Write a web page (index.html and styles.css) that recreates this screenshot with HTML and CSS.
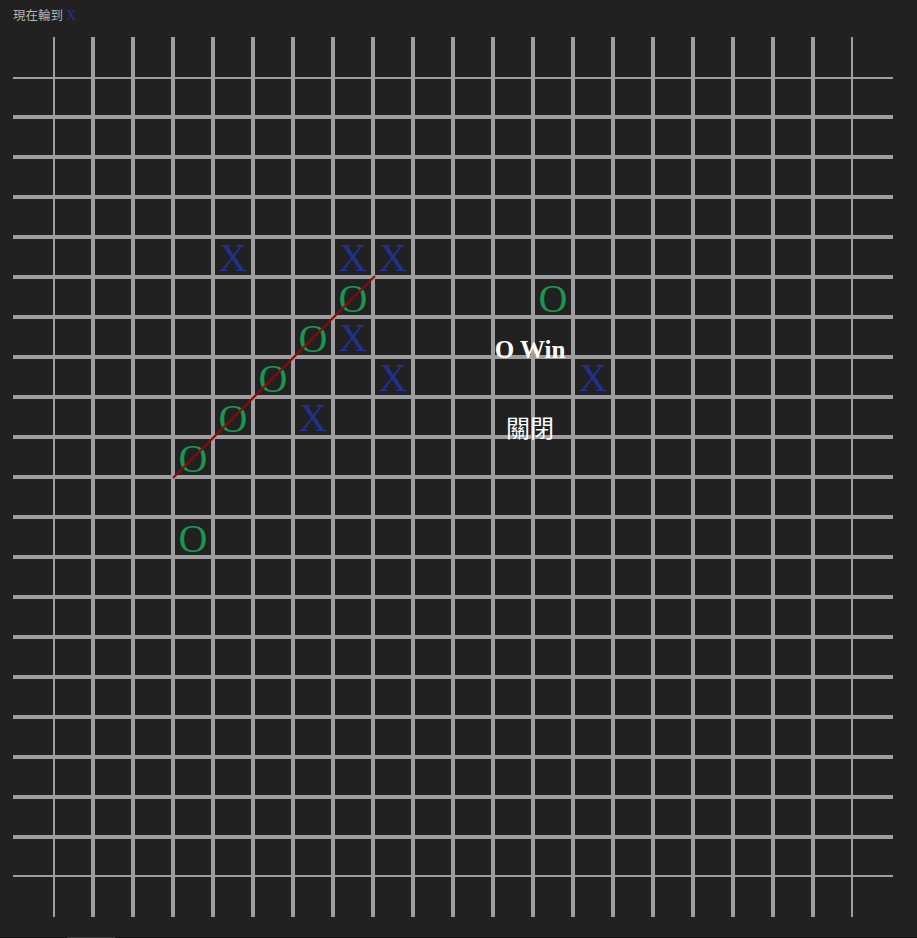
FILE: index.html
```html
<!DOCTYPE html>
<html lang="zh-Hant">
<head>
  <meta charset="UTF-8">
  <meta name="viewport" content="width=device-width, initial-scale=1.0">
  <title>Gomoku</title>
  <link rel="stylesheet" href="styles.css">
</head>
<body>

  <div class="page">
    <div class="status">現在輪到 <span class="turn">X</span></div>

    <div class="board-wrap">
      <div class="board" id="board"></div>

      <svg class="win-line" width="880" height="880" viewBox="0 0 880 880">
        <line x1="160" y1="441" x2="362" y2="239" stroke="#a00000" stroke-width="2" />
      </svg>

      <div class="result">
        <div class="result-title">O Win</div>
        <button type="button" class="close-button">關閉</button>
      </div>
    </div>
  </div>

  <div class="scrollbar"><div class="scroll-thumb"></div></div>

  <script>
    const SIZE = 22;

    // [row, col, mark]
    const moves = [
      [5, 5, 'X'], [5, 8, 'X'], [5, 9, 'X'], [7, 8, 'X'],
      [8, 9, 'X'], [9, 7, 'X'], [8, 14, 'X'],
      [6, 8, 'O'], [7, 7, 'O'], [8, 6, 'O'], [9, 5, 'O'],
      [10, 4, 'O'], [12, 4, 'O'], [6, 13, 'O']
    ];

    const board = document.getElementById('board');

    for (let r = 0; r < SIZE; r++) {
      for (let c = 0; c < SIZE; c++) {
        const cell = document.createElement('div');
        cell.className = 'cell';
        cell.dataset.row = r;
        cell.dataset.col = c;
        board.appendChild(cell);
      }
    }

    moves.forEach(([r, c, mark]) => {
      const cell = board.children[r * SIZE + c];
      const span = document.createElement('span');
      span.textContent = mark;
      cell.appendChild(span);
      cell.classList.add(mark === 'X' ? 'mark-x' : 'mark-o');
    });
  </script>

</body>
</html>
```

FILE: styles.css
```css
html, body {
  margin: 0;
  padding: 0;
  background-color: #212121;
}

body {
  font-family: "Liberation Serif", serif;
  overflow: hidden;
}

.page {
  padding: 0 13px;
}

.status {
  box-sizing: border-box;
  height: 37px;
  padding-top: 5px;
  line-height: 20px;
  font-family: "Noto Sans CJK TC", sans-serif;
  font-size: 12.5px;
  color: #b4b4b4;
}

.turn {
  font-family: "Liberation Serif", serif;
  font-size: 14.5px;
  color: #22318f;
}

.board-wrap {
  position: relative;
  width: 880px;
  height: 880px;
}

.board {
  display: grid;
  grid-template-columns: repeat(22, 40px);
  grid-template-rows: repeat(22, 40px);
}

.cell {
  box-sizing: border-box;
  width: 40px;
  height: 40px;
  border: 2px solid #9e9e9e;
  display: flex;
  align-items: center;
  justify-content: center;
  font-size: 40px;
  line-height: 36px;
}

/* outer edge of the board has no lines */
.cell:nth-child(22n+1),
.cell:nth-child(22n) {
  border-left: none;
  border-right: none;
}

.cell:nth-child(-n+22),
.cell:nth-child(n+463) {
  border-top: none;
  border-bottom: none;
}

.mark-x {
  color: #22318f;
}

.mark-x span {
  margin-top: 2px;
}

.mark-o {
  color: #1b9650;
}

.mark-o span {
  margin-top: 4px;
}

.win-line {
  position: absolute;
  top: 0;
  left: 0;
  pointer-events: none;
}

.result {
  position: absolute;
  top: 298px;
  left: 417px;
  width: 200px;
  display: flex;
  flex-direction: column;
  align-items: center;
  gap: 47px;
}

.result-title {
  font-size: 25px;
  font-weight: bold;
  line-height: 30px;
  color: #ffffff;
}

.close-button {
  background: transparent;
  border: none;
  padding: 0;
  color: #ffffff;
  font-family: "Noto Sans CJK TC", sans-serif;
  font-size: 24px;
  line-height: 30px;
  cursor: pointer;
}

.scrollbar {
  margin-top: 20px;
  height: 1px;
  background: #111111;
}

.scroll-thumb {
  margin-left: 67px;
  width: 48px;
  height: 1px;
  background: #3c3c3c;
}
```
